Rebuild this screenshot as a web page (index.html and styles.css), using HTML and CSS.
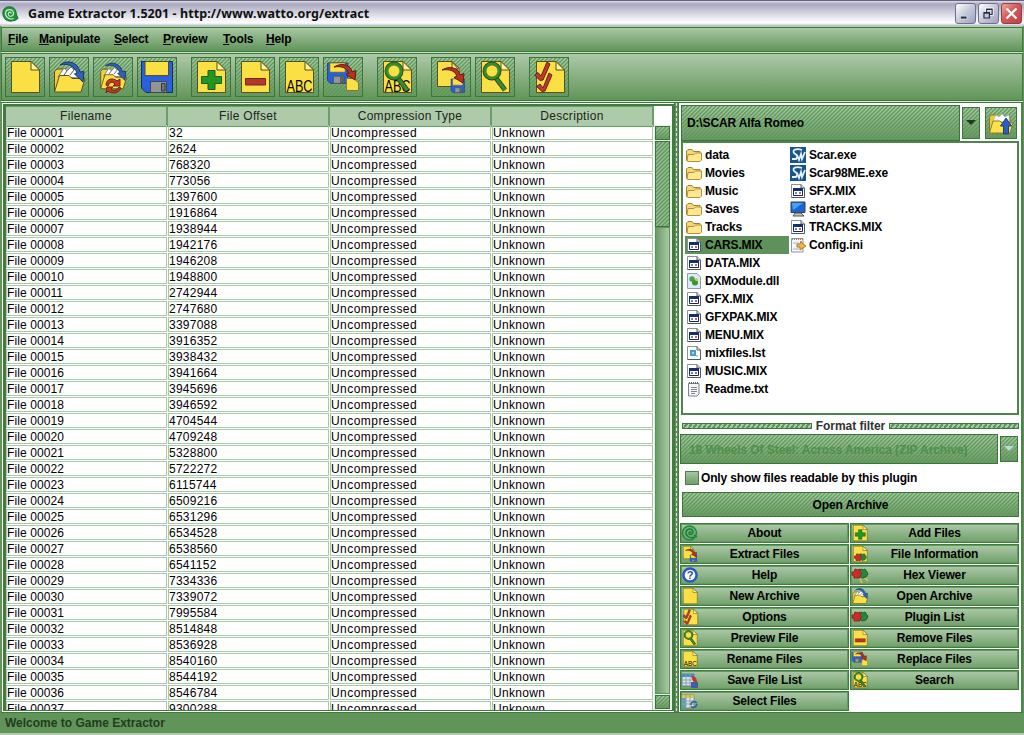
FILE: index.html
```html
<!DOCTYPE html>
<html lang="en">
<head>
<meta charset="utf-8">
<title>Game Extractor 1.5201</title>
<link rel="stylesheet" href="styles.css">
</head>
<body>
<svg class="defs" aria-hidden="true">
  <symbol id="doc" viewBox="0 0 40 40"><path d="M6.5 4.5H26L34.5 13V35.5H6.5Z" fill="#fbe045" stroke="#56511f"/><path d="M26 4.5V13H34.5Z" fill="#fff39a" stroke="#56511f"/></symbol>
  <symbol id="folder" viewBox="0 0 40 40"><path d="M5.500 34.500V14.500L8 12H14L16 15H30V34Z" fill="#f3cf3c" stroke="#56511f"/><path d="M9 20L15 11L18 14L22 10L25 13L28 10L31 21Z" fill="#fff" stroke="#777"/><path d="M15 18L18 14M21 18L25 13" stroke="#555"/><path d="M5.500 35L10.500 18.500H20L23 21.500H36L32 35Z" fill="#fbe045" stroke="#56511f"/></symbol>
  <symbol id="bluearrow" viewBox="0 0 40 40"><path d="M11 8C18 2 29 5 31 15L35 14.500L34 25L25.500 17L28 16C25 8 18 6 11 8Z" fill="#2d62b8" stroke="#1b3260"/></symbol>
  <symbol id="redarrow" viewBox="0 0 40 40"><path d="M11 13C19 8 28 11 29 18L33 16.500L32 26L23 20.500L26 19C23 13 18 12 11 13Z" fill="#b83220" stroke="#641c14"/></symbol>
  <symbol id="disk" viewBox="0 0 40 40"><path d="M4.500 4.500H35.500V35.500H9L4.500 31Z" fill="#2861df" stroke="#182c60"/><path d="M8 4.500H31.500V18.500H8Z" fill="#fbe045" stroke="#56511f"/><path d="M13.500 24.500H29.500V35.500H13.500Z" fill="#929496" stroke="#41454b"/><path d="M24.500 26.500H28V34H24.500Z" fill="#777" stroke="#333"/></symbol>
  <symbol id="glass" viewBox="0 0 40 40"><path d="M21 21L30 33" stroke="#26501c" stroke-width="5"/><path d="M21 21L30 33" stroke="#3b8b2d" stroke-width="3"/><circle cx="17" cy="14" r="7" fill="none" stroke="#26501c" stroke-width="5"/><circle cx="17" cy="14" r="7" fill="#fbe045" stroke="#3b8b2d" stroke-width="3"/></symbol>
  <symbol id="new" viewBox="0 0 40 40"><use href="#doc"/></symbol>
  <symbol id="open" viewBox="0 0 40 40"><use href="#folder"/><use href="#bluearrow"/></symbol>
  <symbol id="reopen" viewBox="0 0 40 40"><g transform="translate(3 2) scale(.85)"><use href="#folder" width="40" height="40"/><use href="#bluearrow" width="40" height="40"/></g><path d="M13 28C13 22 20 20 24 24L27 22V29H20L22 27C19 24 17 25 15 29ZM14 30H20L18 32C21 35 24 33 26 30L28 31C25 37 19 37 15 34L13 36Z" fill="#c13b22" stroke="#702014"/></symbol>
  <symbol id="add" viewBox="0 0 40 40"><use href="#doc"/><path d="M17 13.500H24V19.500H30.500V26.500H24V32.500H17V26.500H10.500V19.500H17Z" fill="#239523" stroke="#185e1d"/></symbol>
  <symbol id="remove" viewBox="0 0 40 40"><use href="#doc"/><path d="M10.500 21.500H30.500V28H10.500Z" fill="#b93729" stroke="#72251b"/></symbol>
  <symbol id="rename" viewBox="0 0 40 40"><use href="#doc"/><text x="20.500" y="34.500" text-anchor="middle" textLength="26" lengthAdjust="spacingAndGlyphs" class="abc">ABC</text></symbol>
  <symbol id="replace" viewBox="0 0 40 40"><g transform="translate(1.500 3) scale(.66)"><use href="#disk" width="40" height="40"/></g><path d="M23.500 21.500H31L35.500 26V33.500H23.500Z" fill="#fbe045" stroke="#847735"/><use href="#redarrow" y="-3" width="40" height="40"/></symbol>
  <symbol id="search" viewBox="0 0 40 40"><use href="#rename"/><use href="#glass"/></symbol>
  <symbol id="extract" viewBox="0 0 40 40"><path d="M6.500 4.500H21L28 11V29.500H6.500Z" fill="#fbe045" stroke="#56511f"/><path d="M21 5V12H27Z" fill="#fff39a" stroke="#56511f"/><g transform="translate(18 20) scale(.44)"><use href="#disk" width="40" height="40"/></g><use href="#redarrow" width="40" height="40"/></symbol>
  <symbol id="preview" viewBox="0 0 40 40"><use href="#doc"/><use href="#glass"/></symbol>
  <symbol id="options" viewBox="0 0 40 40"><use href="#doc" x="1" width="40" height="40"/><path d="M5.500 18L9 15.500L12 19L18 5L21 7L14 23L11 23.500ZM7.500 29.500L11 27L14 31L20 16L23 18L16 34L13 34.500Z" fill="#c0392b" stroke="#61231a"/></symbol>
  <symbol id="spiral" viewBox="0 0 20 20"><path d="M2 9C2 4 6 1.500 10 2C15 2.500 17 6 17 10L19 15L16 17L11 18C5 18 2 14 2 9Z" fill="#20903a" stroke="#1a6b2d"/><path d="M14 15C9 17 4.500 13 5 8.500C6 4 13 4 14 9C14 13 8.500 14 8 10C8 7.500 11 7 11.500 9.500" fill="none" stroke="#c5eccb" stroke-width="1.300"/></symbol>
  <symbol id="about" viewBox="0 0 20 20"><circle cx="9.500" cy="10" r="7" fill="#6fb277" stroke="#258840" stroke-width="1.500"/><path d="M14 14C10 16 5.500 13 6 9C7 5 12.500 5 13 9C13 12 9 12.500 9 10C9 8.500 11 8.500 11 10M14 12L17 14" fill="none" stroke="#1c7a34" stroke-width="1.400"/></symbol>
  <symbol id="help" viewBox="0 0 20 20"><circle cx="10" cy="10" r="6.600" fill="#fff" stroke="#285bc0" stroke-width="2.500"/><text x="10" y="14" text-anchor="middle" class="question">?</text></symbol>
  <symbol id="beans" viewBox="0 0 20 20"><path d="M9 7L11 5L13 6L15 5L17 8L18 10L16 13L12 14L10 12Z" fill="#24883a" stroke="#26602c"/><path d="M2 8L4 8L5 5L8 6L10 5L10 8L12 10L10 12L10 14L7 14L4 14L4 12L2 11Z" fill="#c82d2a" stroke="#8d2925"/></symbol>
  <symbol id="info" viewBox="0 0 20 20"><use href="#doc"/><g transform="translate(3 6) scale(.75)"><use href="#beans" width="20" height="20"/></g></symbol>
  <symbol id="hex" viewBox="0 0 20 20"><path d="M9 12L12 18M13 11L18 16" stroke="#e2c44f" stroke-width="1.500"/><use href="#beans" y="-1" width="20" height="20"/></symbol>
  <symbol id="savelist" viewBox="0 0 20 20"><path d="M2 4H14V16H2Z" fill="#dce4eb" stroke="#667b8e"/><path d="M2 4H14V7H2Z" fill="#3d92bb"/><path d="M2 10H14M2 13H14M6 4V16M10 4V16" stroke="#8ba1b2"/><path d="M11 12H18V18H11Z" fill="#405da8"/><path d="M11 6C15 6 17 8 17 13L13 11Z" fill="#bd3526"/></symbol>
  <symbol id="selectlist" viewBox="0 0 20 20"><path d="M2 4H14V17H2Z" fill="#dfe6d6" stroke="#748b79"/><path d="M2 4H14V7H2Z" fill="#dfc54c"/><path d="M2 7H6V17H2Z" fill="#54a2bd"/><path d="M2 10H14M2 13H14M6 4V16M10 4V16" stroke="#8ba1b2"/><path d="M11 14C11 10 15 10 17 12M17 13C16 17 13 17 11 15.500" fill="none" stroke="#315bb0" stroke-width="1.600"/></symbol>
  <symbol id="dir" viewBox="0 0 16 16"><path d="M.5 13.500V4L2 2.500H6L7.500 4.500H14V13.500Z" fill="#f4d77c" stroke="#a8822e"/><path d="M1 14L2 7.500H8L9.500 6H15.500V13L14 14.500H2Z" fill="#ffe793" stroke="#b88f37"/></symbol>
  <symbol id="sheet" viewBox="0 0 16 16"><path d="M1.500 1.500H11L14.500 5V14.500H1.500Z" fill="#fff" stroke="#8d9394"/><path d="M11 1.500V5H14.500V14.500H1.500" fill="none" stroke="#50595e"/></symbol>
  <symbol id="mix" viewBox="0 0 16 16"><use href="#sheet"/><path d="M3.500 5.500H12.500V12.500H3.500Z" fill="#fff" stroke="#18255e"/><path d="M3 5H13V8H3Z" fill="#182c72"/><path d="M5 10H7M6 9V11" stroke="#236aa5"/><path d="M9 10H11M10 9V11" stroke="#b13035"/></symbol>
  <symbol id="dll" viewBox="0 0 16 16"><path d="M1.500 .5H11L14.500 4V15.500H1.500Z" fill="#dceaf8" stroke="#879db8"/><circle cx="6" cy="6" r="2.700" fill="#47a445"/><circle cx="9" cy="9.500" r="3" fill="#35933b"/><circle cx="10.500" cy="6.500" r="1.500" fill="#e5c04d"/></symbol>
  <symbol id="lst" viewBox="0 0 16 16"><use href="#sheet"/><path d="M4 5H10V11H4Z" fill="#4f9acd"/><path d="M6 7H8V9H6ZM10 10H12V12H10Z" fill="#a4d5ee"/></symbol>
  <symbol id="txt" viewBox="0 0 16 16"><path d="M2.500 2.500H13V13L11 15H2.500Z" fill="#f7f7ef" stroke="#777fa0"/><path d="M3 2H13" stroke="#6e6a5d" stroke-width="2" stroke-dasharray="1 1"/><path d="M5 6.500H11M5 8.500H11M5 10.500H11M5 12.500H9" stroke="#7d83a0"/></symbol>
  <symbol id="scar" viewBox="0 0 16 16"><path d="M0 0H16V16H0Z" fill="#17558b"/><path d="M12 3C6 1 2 3 4 6C6 8 9 8 6 12L2 12M7 8L9 13L11 7L12 12L15 5" fill="none" stroke="#e7f2ff" stroke-width="1.800"/></symbol>
  <symbol id="monitor" viewBox="0 0 16 16"><path d="M1 1H15V11.500H1Z" fill="#1b67d1" stroke="#35405b"/><path d="M2 2H13L3 9Z" fill="#4aa3f2"/><path d="M5 12H11L14 15H3Z" fill="#c3c6bf" stroke="#51564f"/></symbol>
  <symbol id="ini" viewBox="0 0 16 16"><path d="M1.500 1.500H13V15H1.500Z" fill="#f5f7f9" stroke="#8799af"/><path d="M2 2H13" stroke="#9a8966" stroke-width="2" stroke-dasharray="1 1"/><path d="M3 6H9M3 12H9" stroke="#9db4cc"/><path d="M7 7L10 7L11 4L13 7L16 9L13 11L10 13L10 10L7 10Z" fill="#eeb849" stroke="#b37b26"/></symbol>
</svg>

<header class="titlebar">
  <svg class="app-icon"><use href="#spiral"/></svg>
  <h1>Game Extractor 1.5201 - http://www.watto.org/extract</h1>
  <div class="controls">
    <button class="ctl" aria-label="Minimize"><svg viewBox="0 0 21 21"><path d="M5 13.500H12V16.500H5Z" fill="#252b45" stroke="#fff" stroke-width=".6"/></svg></button>
    <button class="ctl" aria-label="Restore"><svg viewBox="0 0 21 21"><path d="M8.500 9V5.500H14.500V11.500H12" fill="none" stroke="#fff" stroke-width="3"/><path d="M8.500 9V5.500H14.500V11.500H12M5.500 9.500H11.500V15.500H5.500ZM5 10H12M8 6H15" fill="none" stroke="#252b45" stroke-width="1.300"/></svg></button>
    <button class="ctl close" aria-label="Close"><svg viewBox="0 0 21 21"><path d="M5 5L16 16M16 5L5 16" stroke="#fff" stroke-width="2.600"/></svg></button>
  </div>
</header>

<nav class="menubar">
  <span><u>F</u>ile</span><span><u>M</u>anipulate</span><span><u>S</u>elect</span><span><u>P</u>review</span><span><u>T</u>ools</span><span><u>H</u>elp</span>
</nav>

<div class="toolbar">
  <div class="group"><button class="tool hatch"><svg><use href="#new"/></svg></button><button class="tool hatch"><svg><use href="#open"/></svg></button><button class="tool hatch"><svg><use href="#reopen"/></svg></button><button class="tool hatch"><svg><use href="#disk"/></svg></button></div>
  <div class="group"><button class="tool hatch"><svg><use href="#add"/></svg></button><button class="tool hatch"><svg><use href="#remove"/></svg></button><button class="tool hatch"><svg><use href="#rename"/></svg></button><button class="tool hatch"><svg><use href="#replace"/></svg></button></div>
  <div class="group"><button class="tool hatch"><svg><use href="#search"/></svg></button></div>
  <div class="group"><button class="tool hatch"><svg><use href="#extract"/></svg></button><button class="tool hatch"><svg><use href="#preview"/></svg></button></div>
  <div class="group"><button class="tool hatch"><svg><use href="#options"/></svg></button></div>
</div>

<main class="workspace">
  <section class="table-panel">
    <div class="table">
      <div class="thead"><span>Filename</span><span>File Offset</span><span>Compression Type</span><span>Description</span></div>
      <div class="tbody" id="rows"></div>
    </div>
    <div class="scrollbar"><div class="sb-button hatch"></div><div class="sb-thumb hatch"></div><div class="sb-track"></div><div class="sb-button hatch"></div></div>
  </section>
  <div class="divider"></div>
  <aside class="side">
    <div class="path-row">
      <div class="path hatch">D:\SCAR Alfa Romeo</div>
      <button class="drop hatch"><svg viewBox="0 0 10 6"><path d="M0 0H10L5 5Z" fill="#1d3d1d"/></svg></button>
      <button class="up hatch"><svg viewBox="0 0 30 30"><path d="M3.500 25V9L5 7H10L12 9H24V25Z" fill="#e9cb40" stroke="#8b7c30"/><path d="M7 13L10 7L13 9L16 6L19 9L23 7V14Z" fill="#fff" stroke="#aaa" stroke-width=".5"/><path d="M3.500 25L7 13H14L16 15H27L24 25Z" fill="#fbe34b" stroke="#8b7c30"/><path d="M20 10L25.500 18H22.500V26H17.500V18H14.500Z" fill="#2a5fc0" stroke="#1d3f80"/></svg></button>
    </div>
    <div class="files">
      <ul>
        <li><svg><use href="#dir"/></svg>data</li><li><svg><use href="#dir"/></svg>Movies</li><li><svg><use href="#dir"/></svg>Music</li><li><svg><use href="#dir"/></svg>Saves</li><li><svg><use href="#dir"/></svg>Tracks</li>
        <li class="selected"><svg><use href="#mix"/></svg>CARS.MIX</li><li><svg><use href="#mix"/></svg>DATA.MIX</li><li><svg><use href="#dll"/></svg>DXModule.dll</li><li><svg><use href="#mix"/></svg>GFX.MIX</li><li><svg><use href="#mix"/></svg>GFXPAK.MIX</li><li><svg><use href="#mix"/></svg>MENU.MIX</li><li><svg><use href="#lst"/></svg>mixfiles.lst</li><li><svg><use href="#mix"/></svg>MUSIC.MIX</li><li><svg><use href="#txt"/></svg>Readme.txt</li>
      </ul>
      <ul>
        <li><svg><use href="#scar"/></svg>Scar.exe</li><li><svg><use href="#scar"/></svg>Scar98ME.exe</li><li><svg><use href="#mix"/></svg>SFX.MIX</li><li><svg><use href="#monitor"/></svg>starter.exe</li><li><svg><use href="#mix"/></svg>TRACKS.MIX</li><li><svg><use href="#ini"/></svg>Config.ini</li>
      </ul>
    </div>
    <div class="filter-title"><i></i><span>Format filter</span><i></i></div>
    <div class="filter-row"><div class="filter hatch">18 Wheels Of Steel: Across America (ZIP Archive)</div><button class="drop hatch"><svg viewBox="0 0 10 6"><path d="M0 0H10L5 5Z" fill="#b5dcd2"/></svg></button></div>
    <label class="check"><span class="box"></span>Only show files readable by this plugin</label>
    <button class="open-archive hatch">Open Archive</button>
    <div class="actions">
      <button><svg><use href="#about"/></svg>About</button><button><svg><use href="#add"/></svg>Add Files</button>
      <button><svg><use href="#extract"/></svg>Extract Files</button><button><svg><use href="#info"/></svg>File Information</button>
      <button><svg><use href="#help"/></svg>Help</button><button><svg><use href="#hex"/></svg>Hex Viewer</button>
      <button><svg><use href="#new"/></svg>New Archive</button><button><svg><use href="#open"/></svg>Open Archive</button>
      <button><svg><use href="#options"/></svg>Options</button><button><svg><use href="#beans"/></svg>Plugin List</button>
      <button><svg><use href="#preview"/></svg>Preview File</button><button><svg><use href="#remove"/></svg>Remove Files</button>
      <button><svg><use href="#rename"/></svg>Rename Files</button><button><svg><use href="#replace"/></svg>Replace Files</button>
      <button><svg><use href="#savelist"/></svg>Save File List</button><button><svg><use href="#search"/></svg>Search</button>
      <button><svg><use href="#selectlist"/></svg>Select Files</button>
    </div>
  </aside>
</main>
<footer class="status">Welcome to Game Extractor</footer>
<script src="app.js"></script>
</body>
</html>
```

FILE: styles.css
```css
* { box-sizing: border-box; }
body {
  margin: 0; width: 1024px; height: 735px; overflow: hidden;
  display: flex; flex-direction: column;
  background: #619458; border-bottom: 2px solid #b4cbb0;
  font: bold 12px/16px "Liberation Sans", Arial, sans-serif; letter-spacing: -.15px; color: #000;
}
button { font: inherit; letter-spacing: inherit; color: inherit; padding: 0; margin: 0; border-radius: 0; }
.defs { position: absolute; width: 0; height: 0; }
.abc { font: 16px "Liberation Sans", Arial, sans-serif; letter-spacing: 0; }
.question { font: bold 11px "Liberation Sans", Arial, sans-serif; fill: #234da5; }
.hatch {
  border: 1px solid #3c753c;
  background:
    linear-gradient(to bottom, rgba(96,149,90,0) 0, rgba(96,149,90,.9) 100%),
    repeating-linear-gradient(135deg, #a9cda6 0, #639a5e 1.414px, #a9cda6 2.828px);
}

.titlebar {
  height: 26px; flex: none; display: flex; align-items: center; padding: 0 2px 0 1px;
  border-top: 1px solid #67657d;
  background: linear-gradient(#dedee8 0, #a9a8c0 3px, #c0c0d0 8px, #e6e6ee 16px, #fff 22px, #b8b8c8 25px);
}
.app-icon { width: 18px; height: 18px; }
.titlebar h1 { margin: 0 0 0 9px; font: bold 12.500px/20px "Noto Sans", sans-serif; letter-spacing: .075px; color: #101010; flex: 1; white-space: nowrap; }
.controls { display: flex; gap: 2px; }
.ctl { width: 21px; height: 21px; border: 1px solid #6c7191; border-radius: 3px; background: linear-gradient(135deg, #fff, #c5c8d8 50%, #9fa4bd); }
.ctl svg { display: block; width: 19px; height: 19px; }
.close { border-color: #8d4046; background: linear-gradient(135deg, #f0a898, #d4595a 45%, #bd4247); }

.menubar {
  height: 25px; flex: none; margin: 1px 1px 0; padding: 0 6px;
  display: grid; grid-template-columns: 31px 75px 49px 60px 43px auto; line-height: 22px;
  border: 1px solid #3f793d; box-shadow: 0 -1px #acd0a7;
  background: linear-gradient(#a8c6a3, #61955a);
}
.toolbar {
  height: 48px; flex: none; margin: 1px 1px 0; padding: 3px; display: flex; gap: 14px;
  border: 1px solid #3f793d; box-shadow: 0 -1px #c3e0bf, 0 1px #d6ebd3;
  background: linear-gradient(#adc9a9, #619558);
}
.group { display: flex; gap: 4px; }
.tool { width: 40px; height: 40px; }
.tool svg { display: block; width: 40px; height: 40px; margin: -1px; }

.workspace { height: 611px; flex: none; margin: 1px 1px 0; display: flex; border-top: 1px solid #3f793d; border-bottom: 1px solid #3f793d; }
.table-panel { width: 672px; flex: none; display: flex; padding: 2px 1px 1px 3px; border: 1px solid #fff; border-width: 1px 0 1px 1px; margin-left: 1px; background: #437a41; }
.table { width: 648px; flex: none; overflow: hidden; background: #fff; }
.thead { display: grid; grid-template-columns: repeat(4, 162px); height: 19px; background: #adcba9; font-weight: normal; text-align: center; letter-spacing: .3px; line-height: 19px; color: #222; }
.thead span { border: 1px solid #6a9f68; border-width: 1px 2px 1px 0; }
.tr { display: grid; grid-template-columns: repeat(4, 162px); height: 16px; font-weight: normal; line-height: 14px; letter-spacing: .3px; }
.td { height: 15px; margin-right: 1px; border: 1px solid #a8cba7; white-space: nowrap; }
.name { letter-spacing: .1px; }
.offset { letter-spacing: .25px; }
.comp { letter-spacing: .45px; }
.scrollbar { width: 18px; flex: none; display: flex; flex-direction: column; gap: 1px; padding: 20px 2px 1px 1px; background: linear-gradient(#fff 19px, #e6f0e4 19px); }
.sb-button { height: 14px; flex: none; }
.sb-thumb { height: 86px; flex: none; background: repeating-linear-gradient(135deg, #98c095 0, #5f955a 1.414px, #98c095 2.828px); }
.sb-track { flex: 1; margin-top: -1px; border: 1px solid #5d935a; background: linear-gradient(90deg, #6a9c65, #aac8a7); }
.divider { width: 5px; flex: none; display: flex; justify-content: center; background: #5b9158; border: 1px solid #3f793d; border-width: 0 1px; }
.divider::before { content: ""; width: 1px; background: repeating-linear-gradient(#d5e8d2 0 3px, #5b9158 3px 5px); }

.side { flex: 1; margin-right: 1px; padding: 1px 2px 0 2px; background: #fff; border-right: 2px solid #4c834a; display: flex; flex-direction: column; }
.path-row { display: flex; height: 37px; flex: none; align-items: center; }
.path { width: 279px; height: 36px; padding-left: 5px; line-height: 35px; }
.drop { width: 18px; height: 32px; margin-left: 2px; display: flex; align-items: center; justify-content: center; }
.drop svg { width: 10px; height: 6px; }
.up { width: 32px; height: 32px; margin-left: 5px; }
.up svg { display: block; width: 30px; height: 30px; }
.files { height: 274px; flex: none; width: 338px; padding: 3px 2px 2px; display: flex; border: 2px solid #4f844d; }
.files ul { list-style: none; margin: 0; padding: 0; width: 104px; white-space: nowrap; }
.files li { height: 18px; display: flex; align-items: center; gap: 3px; padding-left: 1px; }
.files svg { width: 16px; height: 16px; flex: none; }
.selected { background: #5f925a; }
.filter-title { height: 19px; flex: none; display: flex; align-items: center; gap: 3px; padding: 2px 0 0 1px; color: #333; white-space: nowrap; }
.filter-title i { width: 130px; height: 6px; border: 1px solid #3f793d; background: repeating-linear-gradient(125deg, #a7cba4 0 2px, #5f955a 2px 4px); }
.filter-title span { flex: 1; text-align: center; letter-spacing: -.05px; }
.filter-row { height: 30px; flex: none; display: flex; align-items: center; margin-left: -1px; }
.filter { width: 318px; height: 30px; padding-left: 8px; line-height: 30px; letter-spacing: -.07px; color: #4f8f4b; white-space: nowrap; }
.filter-row .drop { height: 26px; width: 18px; }
.check { height: 27px; flex: none; display: flex; align-items: center; gap: 2px; padding-left: 4px; white-space: nowrap; }
.box { width: 14px; height: 14px; border: 1px solid #4c804a; background: linear-gradient(#a5c5a1, #709e6b); }
.open-archive { height: 25px; width: 337px; margin: 1px 0 0 1px; flex: none; }
.actions { display: grid; grid-template-columns: 169px 169px; grid-auto-rows: 20px; gap: 1px; margin: 2px -1px 0; padding-top: 4px; background: #fff; }
.actions button { display: grid; grid-template-columns: 20px 1fr 20px; align-items: center; line-height: 18px; border: 1px solid #3f7d3d; box-shadow: inset 0 0 0 1px #629b60; background: linear-gradient(#adc9a9, #70a069); }
.actions svg { width: 20px; height: 20px; margin: -1px; }
.status { flex: 1; padding-left: 5px; line-height: 21px; letter-spacing: 0; color: #1e3e1d; }
```

FILE: app.js
```javascript
const offsets = [32, 2624, 768320, 773056, 1397600, 1916864, 1938944, 1942176, 1946208, 1948800,
  2742944, 2747680, 3397088, 3916352, 3938432, 3941664, 3945696, 3946592, 4704544, 4709248,
  5328800, 5722272, 6115744, 6509216, 6531296, 6534528, 6538560, 6541152, 7334336, 7339072,
  7995584, 8514848, 8536928, 8540160, 8544192, 8546784, 9300288];

const body = document.getElementById('rows');
offsets.forEach((offset, i) => {
  const row = document.createElement('div');
  row.className = 'tr';
  const cells = [
    ['name', 'File ' + String(i + 1).padStart(5, '0')],
    ['offset', offset],
    ['comp', 'Uncompressed'],
    ['desc', 'Unknown']
  ];
  for (const [cls, text] of cells) {
    const cell = document.createElement('div');
    cell.className = 'td ' + cls;
    cell.textContent = text;
    row.append(cell);
  }
  body.append(row);
});
```
